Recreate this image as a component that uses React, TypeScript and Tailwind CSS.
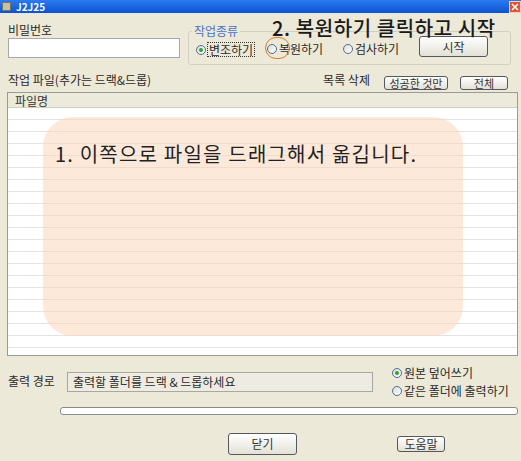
import React from 'react';

const font = { fontFamily: '"Noto Sans CJK KR", "Noto Sans", sans-serif' };

const Radio: React.FC<{ checked?: boolean }> = ({ checked }) => (
  <span className="w-[10px] h-[10px] rounded-full border border-[#4f6f9c] bg-gradient-to-br from-[#dcdcd6] to-white flex items-center justify-center shrink-0">
    {checked && <span className="w-[4px] h-[4px] rounded-full bg-[#2fa12f]" />}
  </span>
);

const XpButton: React.FC<{ label: string; className?: string }> = ({ label, className = '' }) => (
  <button
    className={`border border-[#55585e] rounded-[3px] bg-gradient-to-b from-white to-[#e3e1d6] text-[#333] flex items-center justify-center leading-none ${className}`}
  >
    {label}
  </button>
);

const rows = Array.from({ length: 21 });

export default function App() {
  return (
    <div style={font} className="w-[521px] h-[461px] overflow-hidden bg-[#ece9d8] text-[12px] text-[#2a2a2a] relative">
      {/* title bar */}
      <div className="h-[13px] bg-gradient-to-b from-[#2b7af0] to-[#0a53d0] flex items-center justify-between">
        <div className="flex items-center gap-[5px] pl-[2px]">
          <span className="w-[9px] h-[9px] bg-[#c7c0a8] border border-[#7a735c] rounded-[1px]" />
          <span className="text-white font-bold text-[10px] leading-[13px]">J2J25</span>
        </div>
        <span className="w-[12px] h-[12px] bg-[#e0552f] border border-white/70 flex items-center justify-center">
          <svg width="8" height="8" viewBox="0 0 8 8">
            <path d="M1 1L7 7M7 1L1 7" stroke="white" strokeWidth="1.6" />
          </svg>
        </span>
      </div>

      {/* top row */}
      <div className="flex pl-[8px] relative">
        <div className="w-[172px]">
          <div className="mt-[10px] leading-[14px]">비밀번호</div>
          <div className="mt-[1px] h-[20px] bg-white border border-[#a9a9a9]" />
        </div>

        <div className="ml-[8px] mt-[18px] w-[323px] h-[34px] border border-[#d0cfc2] rounded-[3px] relative flex items-start">
          <span className="absolute -top-[8px] left-[3px] px-[2px] bg-[#ece9d8] text-[#4a72c4] leading-[14px]">작업종류</span>
          <div className="flex items-center w-[78px] pl-[7px] mt-[10px] gap-[1px]">
            <Radio checked />
            <span className="border border-dotted border-[#333] leading-[13px] px-[1px]">변조하기</span>
          </div>
          <div className="flex items-center w-[76px] mt-[10px] gap-[1px]">
            <Radio />
            <span className="leading-[13px] px-[1px]">복원하기</span>
          </div>
          <div className="flex items-center w-[76px] mt-[10px] gap-[1px]">
            <Radio />
            <span className="leading-[13px] px-[1px]">검사하기</span>
          </div>
          <XpButton label="시작" className="w-[69px] h-[21px] mt-[4px]" />
        </div>

        {/* annotation overlay */}
        <div className="absolute left-[272px] top-[3px] text-[20px] font-medium text-[#1a1a1a] leading-[24px] tracking-[0.6px]">
          2. 복원하기 클릭하고 시작
        </div>
        <div className="absolute left-[265px] top-[24px] w-[25px] h-[22px] rounded-full border-[1.5px] border-[#e07b2e]" />
      </div>

      {/* file row */}
      <div className="flex pl-[8px] h-[18px] mt-[8px]">
        <span className="leading-[14px]">작업 파일(추가는 드랙&amp;드롭)</span>
        <span className="leading-[14px] ml-[172px]">목록 삭제</span>
        <XpButton label="성공한 것만" className="ml-[14px] mt-[3px] w-[64px] h-[14px] text-[11px]" />
        <XpButton label="전체" className="ml-[12px] mt-[3px] w-[48px] h-[14px] text-[11px]" />
      </div>

      {/* list */}
      <div className="ml-[7px] mt-[1px] w-[511px] h-[264px] border border-[#9a9a9a] bg-white relative overflow-hidden">
        <div className="h-[15px] bg-[#ebeadb] border-b border-[#d2cfbf] pl-[7px] leading-[15px] text-[#333]">파일명</div>
        {rows.map((_, i) => (
          <div key={i} className="h-[12px] border-b border-[#e4e2e2]" />
        ))}
        <div className="absolute left-[35px] top-[24px] w-[420px] h-[219px] rounded-[30px] bg-[#fbd3b5]/50">
          <div className="mt-[25px] ml-[12px] text-[20px] leading-[24px] tracking-[1.2px] text-[#222]">1. 이쪽으로 파일을 드래그해서 옮깁니다.</div>
        </div>
      </div>

      {/* output row */}
      <div className="flex pl-[8px] mt-[8px] h-[36px]">
        <span className="w-[59px] mt-[10px] leading-[14px]">출력 경로</span>
        <div className="mt-[8px] w-[306px] h-[20px] border border-[#a8a8a0] bg-[#eeece2] pl-[5px] leading-[18px]">
          출력할 폴더를 드랙 &amp; 드롭하세요
        </div>
        <div className="ml-[19px] flex flex-col">
          <div className="flex items-center gap-[2px] h-[18px]">
            <Radio checked />
            <span>원본 덮어쓰기</span>
          </div>
          <div className="flex items-center gap-[2px] h-[18px]">
            <Radio />
            <span>같은 폴더에 출력하기</span>
          </div>
        </div>
      </div>

      {/* progress */}
      <div className="ml-[60px] mt-[7px] w-[458px] h-[8px] rounded-[3px] border border-[#8a8a8a] bg-white" />

      {/* bottom buttons */}
      <div className="flex mt-[18px]">
        <XpButton label="닫기" className="ml-[228px] w-[69px] h-[22px]" />
        <XpButton label="도움말" className="ml-[100px] mt-[3px] w-[48px] h-[16px] border-[#333]" />
      </div>
    </div>
  );
}
